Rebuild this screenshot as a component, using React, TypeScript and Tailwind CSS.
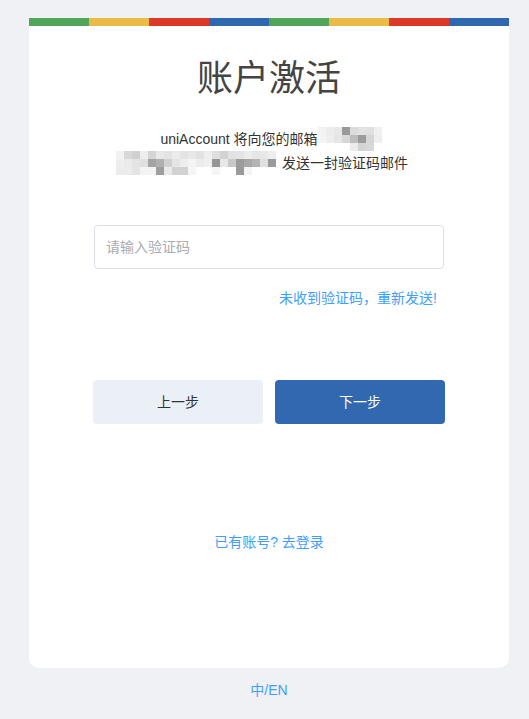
const stripe = ['bg-[#4fa55a]', 'bg-[#ecbb47]', 'bg-[#dc3a26]', 'bg-[#3068b0]', 'bg-[#4fa55a]', 'bg-[#ecbb47]', 'bg-[#dc3a26]', 'bg-[#3068b0]'];

// 이메일 모자이크 (가려진 주소)
const mosaicA = [
  ['#f2f2f2', '#ececec', '#e8e8e8', '#9a9a9a', '#dcdcdc', '#e2e2e2', '#e0e0e0', '#f0f0f0'],
  ['#f4f4f4', '#eeeeee', '#e6e6e6', '#d8d8d8', '#bdbdbd', '#9c9c9c', '#d6d6d6', '#eeeeee'],
  ['#ffffff', '#ffffff', '#ffffff', '#ffffff', '#ececec', '#d4d4d4', '#d8d8d8', '#ffffff'],
];
const mosaicB = [
  ['#f2f2f2', '#d8d8d8', '#d0d0d0', '#eeeeee', '#d4d4d4', '#e8e8e8', '#e4e4e4', '#ececec', '#e4e4e4', '#e8e8e8', '#e2e2e2', '#eeeeee', '#dedede', '#d2d2d2', '#e2e2e2', '#e4e4e4', '#ececec', '#e6e6e6', '#e8e8e8', '#eeeeee'],
  ['#eeeeee', '#eaeaea', '#e4e4e4', '#e0e0e0', '#a4a4a4', '#b0b0b0', '#d0d0d0', '#e4e4e4', '#eeeeee', '#f4f4f4', '#ececec', '#f0f0f0', '#969696', '#e8e8e8', '#c8c8c8', '#9c9c9c', '#a8a8a8', '#b4b4b4', '#e0e0e0', '#9a9a9a'],
  ['#ececec', '#ececec', '#e4e4e4', '#f4f4f4', '#f4f4f4', '#9e9e9e', '#eaeaea', '#d2d2d2', '#d2d2d2', '#f6f6f6', '#ffffff', '#ffffff', '#f6f6f6', '#ffffff', '#ffffff', '#9a9a9a', '#f4f4f4', '#ffffff', '#ffffff', '#ffffff'],
];

function Mosaic({ cells }: { cells: string[][] }) {
  const w = cells[0].length * 8;
  return (
    <svg width={w} height={24} className="inline-block align-middle">
      {cells.map((row, r) => row.map((c, i) => <rect key={r + '-' + i} x={i * 8} y={r * 8} width={8} height={8} fill={c} />))}
    </svg>
  );
}

export default function App() {
  return (
    <div className="min-h-[719px] w-full bg-[#f0f1f5] flex flex-col items-center pt-[18px] pl-[9px] font-['Helvetica_Neue','Liberation_Sans','Noto_Sans_CJK_SC',sans-serif]">
      <div className="w-[480px] h-[650px] bg-white rounded-b-[10px] flex flex-col">
        <div className="flex h-[8px] shrink-0">
          {stripe.map((c, i) => <div key={i} className={`flex-1 ${c}`} />)}
        </div>

        <h1 className="mt-[29px] text-center text-[36px] leading-[48px] text-[#444] font-normal">账户激活</h1>

        <div className="mt-[24px] text-[14px] leading-[24px] text-[#333] flex flex-col items-center">
          <div className="flex items-center pl-[4px]">
            <span>uniAccount 将向您的邮箱</span>
            <Mosaic cells={mosaicA} />
          </div>
          <div className="flex items-center pr-[14px]">
            <Mosaic cells={mosaicB} />
            <span className="ml-[6px]">发送一封验证码邮件</span>
          </div>
        </div>

        <div className="mt-[50px] px-[65px]">
          <div className="h-[44px] border border-[#dcdfe6] rounded-[4px] flex items-center px-[11px] text-[14px] text-[#a8abb2]">
            请输入验证码
          </div>
          <div className="mt-[19px] text-right pr-[7px] text-[14px] leading-[20px] text-[#409eff]">未收到验证码，重新发送!</div>
        </div>

        <div className="mt-[72px] flex justify-center gap-[12px]">
          <button className="w-[170px] h-[44px] rounded-[4px] bg-[#ebeff6] text-[14px] text-[#333]">上一步</button>
          <button className="w-[170px] h-[44px] rounded-[4px] bg-[#3168af] text-[14px] text-white">下一步</button>
        </div>

        <div className="mt-[108px] text-center text-[14px] leading-[20px] text-[#409eff]">已有账号? 去登录</div>
      </div>
      <div className="mt-[12px] text-[14px] leading-[20px] text-[#409eff]">中/EN</div>
    </div>
  );
}
